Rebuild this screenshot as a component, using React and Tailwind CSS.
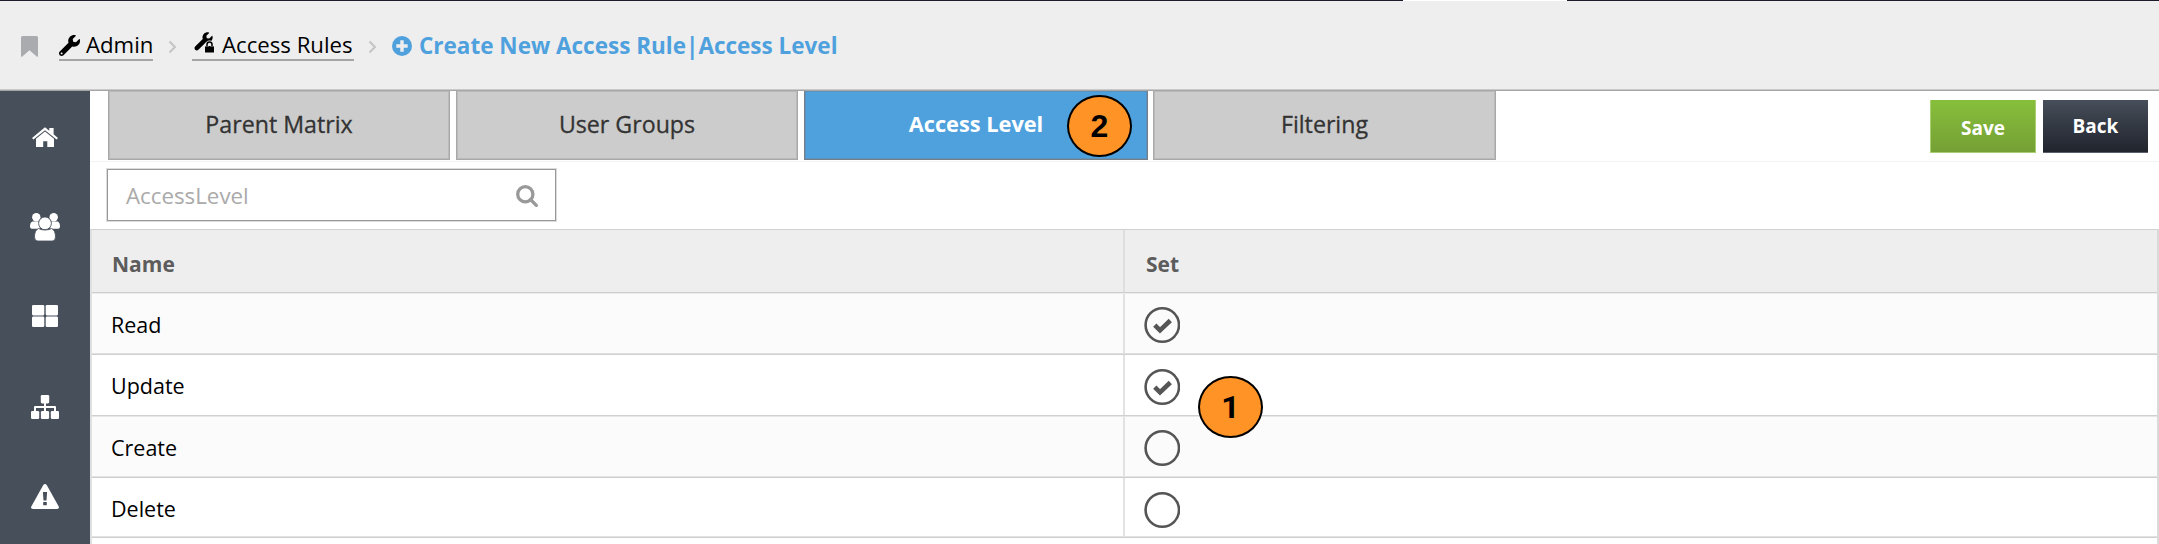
import React from "react";
import { FaWrench } from "react-icons/fa";

const tabs = [
  { label: "Parent Matrix", box: "w-[342px]" },
  { label: "User Groups", box: "w-[342px]" },
  { label: "Access Level", box: "w-[344px]", active: true, badge: "2" },
  { label: "Filtering", box: "w-[343px] -ml-px" },
];

const rows = [
  { name: "Read", set: true, pad: "pt-[3px]", style: "h-[61px] bg-[#fbfbfb] border-t-[#ececec] border-b-[#dfdfdf]" },
  { name: "Update", set: true, pad: "pt-[3px]", badge: "1", style: "h-[62px] bg-white border-t-[#d0d0d0] border-b-[#d0d0d0]" },
  { name: "Create", set: false, pad: "pt-[3px]", style: "h-[61px] bg-[#fbfbfb] border-t-[#e6e6e6] border-b-[#e4e4e4]" },
  { name: "Delete", set: false, pad: "pt-[5px]", style: "h-[60px] bg-white border-t-[#cdcdcd] border-b-[#e2e2e2]" },
];

function Badge({ children, className }) {
  return (
    <span className={`absolute z-10 flex h-[62px] w-[65px] items-center justify-center rounded-[50%] border-2 border-black bg-[#ff9326] text-[32px] leading-none font-bold text-black ${className}`}>
      {children}
    </span>
  );
}

function Chevron({ className }) {
  return (
    <svg className={className} width="10" height="14" viewBox="0 0 10 14" fill="none" stroke="#c4c4c4" strokeWidth="2">
      <path d="M1.500 1.500 7 7l-5.500 5.500" />
    </svg>
  );
}

function WrenchLock() {
  return (
    <svg width="21" height="21" viewBox="0 0 21 21" className="shrink-0">
      <g transform="translate(0.500 0.300) scale(0.0355)">
        <path d="M507.730 109.100c-2.240-9.030-13.540-12.090-20.120-5.510l-74.360 74.360-67.880-11.310-11.310-67.880 74.360-74.360c6.620-6.620 3.430-17.900-5.660-20.160-47.380-11.740-99.550.91-136.580 37.930-39.640 39.640-50.550 97.100-34.050 147.200L18.740 402.760c-24.990 24.990-24.990 65.510 0 90.500 24.990 24.990 65.510 24.990 90.500 0l213.210-213.210c50.120 16.710 107.470 5.680 147.370-34.220 37.070-37.070 49.700-89.320 37.910-136.730z" />
      </g>
      <rect x="10" y="12.200" width="10.600" height="9" fill="#eee" />
      <rect x="11" y="14" width="9" height="6.500" rx=".6" />
      <path d="M13 14.500v-1.900a2.500 2.500 0 0 1 5 0v1.900" fill="none" stroke="#eee" strokeWidth="3.400" />
      <path d="M13 14.500v-1.900a2.500 2.500 0 0 1 5 0v1.900" fill="none" stroke="#000" strokeWidth="1.500" />
    </svg>
  );
}

function Header() {
  return (
    <header className="flex h-[91px] shrink-0 flex-col border-b border-b-[#a6a6a6] bg-[#eee]">
      <div className="flex h-px shrink-0 bg-[#1c1b29]">
        <div className="ml-[1403px] w-[164px] bg-white" />
      </div>
      <div className="flex flex-1 items-center border-b border-b-[#c9c9c9] pl-[21px] text-[22.200px] leading-[30px] text-black">
        <svg width="17" height="21" viewBox="0 0 17 21" fill="#a9abaf" className="mt-[3px]">
          <path d="M1.500 0h14A1.500 1.500 0 0 1 17 1.500V20a.8.8 0 0 1-1.300.6L8.500 14.200 1.300 20.600A.8.8 0 0 1 0 20V1.500A1.500 1.500 0 0 1 1.500 0Z" />
        </svg>
        <a className="ml-[21px] flex h-[32px] w-[94px] items-center border-b-2 border-[#a5a5a8] whitespace-nowrap">
          <FaWrench className="mt-[3px] size-[21px] shrink-0" />
          <span className="ml-[6px] pt-[2px]">Admin</span>
        </a>
        <Chevron className="mt-[3px] ml-[15px]" />
        <a className="ml-[14px] flex h-[32px] w-[162px] items-center border-b-2 border-[#a5a5a8] whitespace-nowrap">
          <span className="-mt-[3px] ml-[2px]"><WrenchLock /></span>
          <span className="ml-[7px] pt-[2px]">Access Rules</span>
        </a>
        <Chevron className="mt-[3px] ml-[14px]" />
        <div className="ml-[14px] flex items-center whitespace-nowrap text-[#4fa1de]">
          <svg width="20" height="20" viewBox="0 0 20 20" className="mt-[1px]">
            <circle cx="10" cy="10" r="10" fill="#4fa1de" />
            <path d="M10 4.300v11.400M4.300 10h11.400" stroke="#eee" strokeWidth="3.400" />
          </svg>
          <span className="ml-[7px] pt-[2px] text-[22.500px] font-bold">Create New Access Rule|Access Level</span>
        </div>
      </div>
    </header>
  );
}

function Sidebar() {
  return (
    <nav className="flex w-[90px] shrink-0 flex-col items-center bg-[#474f5b] pt-[36px] text-white">
      <svg width="26" height="20" viewBox="0 0 26 20" fill="#fff">
        <path d="M0 11 13 .3l4.300 3.500V1h4.300v6.300L26 11l-1.400 1.500L13 3.200 1.400 12.500Z" />
        <path d="M4 11.700 13 4.600l9 7.100V20h-6.700v-5.700h-4.100V20H4Z" />
      </svg>
      <svg width="30" height="28" viewBox="0 0 30 28" fill="#fff" className="mt-[66px]">
        <circle cx="6.300" cy="4.200" r="4.200" />
        <circle cx="23.700" cy="4.200" r="4.200" />
        <path d="M2.300 8.500h7.500v7.300H3Q0 15.800 0 13.500 0 9.700 2.300 8.500ZM27.700 8.500h-7.500v7.300H27q3 0 3-2.300 0-3.800-2.300-5Z" />
        <path d="M8.500 15.500Q11 17 15 17t6.500-1.500q4 1.800 4 8.500 0 4-3.300 4H7.800q-3.300 0-3.300-4 0-6.700 4-8.500Z" stroke="#474f5b" strokeWidth=".8" />
        <circle cx="15" cy="10.300" r="6.400" stroke="#474f5b" strokeWidth=".9" />
      </svg>
      <svg width="26" height="22" viewBox="0 0 26 22" fill="#fff" className="mt-[64px]">
        <rect width="12.300" height="10.400" rx="1.300" />
        <rect x="13.700" width="12.300" height="10.400" rx="1.300" />
        <rect y="11.600" width="12.300" height="10.400" rx="1.300" />
        <rect x="13.700" y="11.600" width="12.300" height="10.400" rx="1.300" />
      </svg>
      <svg width="28" height="24" viewBox="0 0 28 24" fill="#fff" className="mt-[68px]">
        <rect x="9.800" width="8.400" height="8.400" rx="1.300" />
        <rect y="16" width="8.200" height="8" rx="1.300" />
        <rect x="9.900" y="16" width="8.200" height="8" rx="1.300" />
        <rect x="19.800" y="16" width="8.200" height="8" rx="1.300" />
        <path d="M14 7v10M4 17v-5h20v5" fill="none" stroke="#fff" strokeWidth="2" strokeLinejoin="round" />
      </svg>
      <svg width="28" height="25" viewBox="0 0 28 25" className="mt-[65px]">
        <path d="M12.300 1q1.700-2 3.400 0l12 21.500q.9 2.500-1.700 2.500H2q-2.600 0-1.700-2.500Z" fill="#fff" />
        <path d="M11.900 8h4.200l-.6 8.500h-3ZM12.200 17.900h3.600v3.400h-3.600Z" fill="#474f5b" />
      </svg>
    </nav>
  );
}

function TabBar() {
  return (
    <div className="flex h-[71px] shrink-0 justify-between border-b border-[#f3f3f3] pr-[11px] pl-[18px]">
      <div className="flex gap-[6px]">
        {tabs.map((t) => (
          <div
            key={t.label}
            className={`relative flex h-[69px] items-center justify-center border-x border-b pb-[2px] ${t.box} ${
              t.active
                ? "border-[#777d84] bg-[#4fa1de] text-[21.750px] font-bold text-white inset-shadow-[0_0_0_1px_#5b93bf]"
                : "border-[#a8a8a8] bg-[#ccc] text-[23.200px] font-normal text-[#333] inset-shadow-[0_0_0_1px_#bababa] [-webkit-text-stroke:0.300px_#333]"
            }`}
          >
            {t.label}
            {t.badge && <Badge className="top-[4px] right-[15px] font-['Liberation_Sans',sans-serif]">{t.badge}</Badge>}
          </div>
        ))}
      </div>
      <div className="flex gap-[7px] pt-[9px] text-[19px] font-bold text-white [text-shadow:1px_2px_3px_rgba(0,0,0,0.5)]">
        <button className="h-[53px] w-[106px] border-x border-b border-[#a9cf72] bg-linear-to-b from-[#87bf3b] to-[#75a035] pt-[4px]">Save</button>
        <button className="h-[53px] w-[105px] border-b border-[#5b5f69] bg-linear-to-b from-[#474f5a] to-[#20242d]">Back</button>
      </div>
    </div>
  );
}

function Check({ on }) {
  return (
    <svg width="36" height="36" viewBox="0 0 36 36" fill="none" stroke="#555" className="shrink-0">
      <circle cx="18.300" cy="18" r="16.700" strokeWidth="2.600" />
      {on && <path d="m10.800 18.200 5.200 5.200L26.300 13.500" strokeWidth="4.600" />}
    </svg>
  );
}

export default function App() {
  return (
    <div className="flex h-[544px] w-full flex-col overflow-hidden bg-white font-['Open_Sans','Noto_Sans',sans-serif]">
      <Header />
      <div className="flex min-h-0 flex-1">
        <Sidebar />
        <main className="flex min-w-0 flex-1 flex-col">
          <TabBar />
          <div className="flex h-[67px] shrink-0 pt-[7px] pl-[17px]">
            <div className="flex h-[52px] w-[449px] items-center justify-between border border-[#999] pr-[17px] pl-[18px] text-[22.300px] text-[#aaa] shadow-[0_0_0_1px_#dcdcdc]">
              <span className="pt-px">AccessLevel</span>
              <svg width="22" height="22" viewBox="0 0 22 22" fill="none" stroke="#999" className="mt-[2px]">
                <circle cx="9.300" cy="9.300" r="7.600" strokeWidth="3.300" />
                <path d="m14.500 14.500 5.800 5.800" strokeWidth="3.300" strokeLinecap="round" />
              </svg>
            </div>
          </div>
          <div className="flex flex-1 flex-col border-t border-r-2 border-l-2 border-t-[#d0d0d0] border-r-[#dadada] border-l-[#e0e0e0]">
            <div className="flex h-[63px] shrink-0 border-b border-[#cecece] bg-[#eee] text-[21px] font-bold text-[#5c5c5c]">
              <div className="flex w-[1033px] items-center border-r-2 border-[#dedede] pt-[8px] pl-[20px]">Name</div>
              <div className="flex items-center pt-[8px] pl-[21px]">Set</div>
            </div>
            {rows.map((r) => (
              <div key={r.name} className={`flex shrink-0 border-y text-[21.500px] text-black ${r.style}`}>
                <div className={`flex w-[1033px] items-center border-r-2 border-[#e2e2e2] pl-[19px] ${r.pad}`}>{r.name}</div>
                <div className={`relative flex items-center pl-[19px] ${r.pad}`}>
                  <Check on={r.set} />
                  {r.badge && <Badge className="top-[21px] left-[73px] font-['Roboto',sans-serif]">{r.badge}</Badge>}
                </div>
              </div>
            ))}
            <div className="border-t border-[#d0d0d0]" />
          </div>
        </main>
      </div>
    </div>
  );
}
